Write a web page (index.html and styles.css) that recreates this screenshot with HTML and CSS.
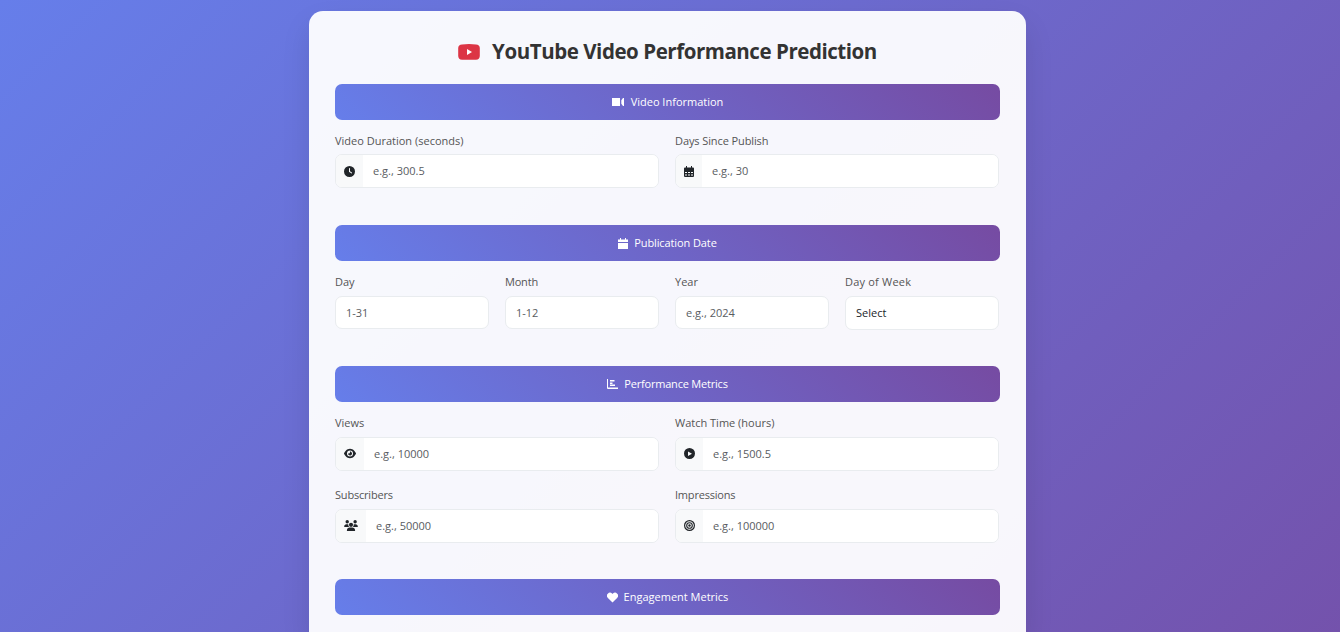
FILE: index.html
```html
<!DOCTYPE html>
<html lang="en">
<head>
<meta charset="utf-8">
<title>YouTube Video Performance Prediction</title>
<link rel="stylesheet" href="styles.css">
</head>
<body>
<main class="card">
  <h1 class="title">
    <svg class="logo" viewBox="0 0 22 16"><path d="M4 .4Q11-.4 18 .4 21.600.4 21.800 4v8q-.2 3.600-3.800 3.800H4Q.4 15.600.2 12V4Q.4.400 4 .4z" fill="#dc3545"/><path d="M9 5v6l5-3z" fill="#fff"/></svg>
    <span>YouTube Video Performance Prediction</span>
  </h1>

  <section class="section">
    <h2 class="bar"><svg width="13" height="12" viewBox="0 0 13 12"><path d="M1 2h7v8H1a1 1 0 0 1-1-1V3a1 1 0 0 1 1-1zM8 2v8H0V2zM9.300 4.200 11 2h1v8h-1L9.300 7.800z"/></svg><span class="bar-text">Video Information</span></h2>
    <div class="grid two">
      <label class="field"><span class="label">Video Duration (seconds)</span>
        <span class="group"><span class="addon"><svg width="11" height="11" viewBox="0 0 512 512"><path d="M256 0a256 256 0 1 1 0 512A256 256 0 1 1 256 0zM232 120v136c0 8 4 15.500 10.700 20l96 64c11 7.400 25.900 4.400 33.300-6.700s4.400-25.900-6.700-33.300L280 243.200V120c0-13.300-10.700-24-24-24s-24 10.700-24 24z"/></svg></span><input class="input" placeholder="e.g., 300.5"></span></label>
      <label class="field"><span class="label snug">Days Since Publish</span>
        <span class="group"><span class="addon"><svg width="10" height="11" viewBox="0 0 10 11"><path fill-rule="evenodd" d="M2 0h1v1.500h4V0h1v1.500h1a1 1 0 0 1 1 1V10a1 1 0 0 1-1 1H1a1 1 0 0 1-1-1V2.500a1 1 0 0 1 1-1h1zM1 6v1h2V6zm3 0v1h2V6zm3 0v1h2V6zM1 8.500v1h2v-1zm3 0v1h2v-1zm3 0v1h2v-1z"/></svg></span><input class="input" placeholder="e.g., 30"></span></label>
    </div>
  </section>

  <section class="section">
    <h2 class="bar"><svg width="10" height="11" viewBox="0 0 10 11"><path d="M2 0h1v1.500h4V0h1v1.500h2V4H0V1.500h2zM0 5h10v6H0z"/></svg><span class="bar-text snug">Publication Date</span></h2>
    <div class="grid four">
      <label class="field"><span class="label">Day</span><input class="input solo" placeholder="1-31"></label>
      <label class="field"><span class="label tight">Month</span><input class="input solo" placeholder="1-12"></label>
      <label class="field"><span class="label">Year</span><input class="input solo" placeholder="e.g., 2024"></label>
      <label class="field"><span class="label loose">Day of Week</span><select class="input solo select"><option>Select</option></select></label>
    </div>
  </section>

  <section class="section">
    <h2 class="bar"><svg width="11" height="11" viewBox="0 0 11 11"><path d="M0 0h1v8.500h10V10H1a1 1 0 0 1-1-1zM3 1h4.500v1.500H3zM3 3.500h2.500V5H3zM3 5.500h5V7H3z"/></svg><span class="bar-text tight">Performance Metrics</span></h2>
    <div class="grid two rows">
      <label class="field"><span class="label">Views</span>
        <span class="group"><span class="addon"><svg width="12" height="11" viewBox="0 0 576 512"><path d="M288 32c-80.800 0-145.500 36.800-192.600 80.600C48.600 156 17.300 208 2.500 243.700c-3.300 7.900-3.300 16.700 0 24.600C17.300 304 48.600 356 95.400 399.400 142.500 443.200 207.200 480 288 480s145.500-36.800 192.600-80.600c46.800-43.500 78.100-95.400 93-131.100 3.300-7.900 3.300-16.700 0-24.600-14.900-35.700-46.200-87.700-93-131.100C433.500 68.800 368.800 32 288 32zM144 256a144 144 0 1 1 288 0 144 144 0 1 1-288 0zm144-64c0 35.300-28.700 64-64 64-7.100 0-13.900-1.200-20.300-3.300-5.500-1.800-11.900 1.600-11.700 7.400.3 6.900 1.300 13.800 3.200 20.700 13.700 51.200 66.400 81.600 117.600 67.900s81.600-66.400 67.900-117.600c-11.100-41.500-47.800-69.400-88.600-71.100-5.800-.2-9.200 6.100-7.400 11.700 2.100 6.400 3.300 13.200 3.300 20.300z"/></svg></span><input class="input" placeholder="e.g., 10000"></span></label>
      <label class="field"><span class="label">Watch Time (hours)</span>
        <span class="group"><span class="addon"><svg width="11" height="11" viewBox="0 0 11 11"><path fill-rule="evenodd" d="M5.500 0a5.500 5.500 0 1 1 0 11 5.500 5.500 0 0 1 0-11zM4 3.500v4.500l4-2.250z"/></svg></span><input class="input" placeholder="e.g., 1500.5"></span></label>
      <label class="field"><span class="label tight">Subscribers</span>
        <span class="group"><span class="addon"><svg width="14" height="11" viewBox="0 0 640 512"><path d="M144 0a80 80 0 1 1 0 160 80 80 0 1 1 0-160zM512 0a80 80 0 1 1 0 160 80 80 0 1 1 0-160zM0 298.700C0 239.800 47.800 192 106.700 192h42.700c15.900 0 31 3.500 44.600 9.700-1.300 7.200-1.900 14.700-1.900 22.300 0 38.200 16.800 72.500 43.300 96H21.300C9.600 320 0 310.400 0 298.700zM405.300 320h-.7c26.600-23.500 43.300-57.800 43.300-96 0-7.600-.7-15-1.900-22.300 13.600-6.300 28.700-9.700 44.600-9.700h42.700C592.200 192 640 239.800 640 298.700c0 11.800-9.600 21.300-21.300 21.300zM224 224a96 96 0 1 1 192 0 96 96 0 1 1-192 0zM128 485.300C128 411.700 187.700 352 261.300 352h117.300C452.300 352 512 411.700 512 485.300c0 14.700-11.900 26.700-26.700 26.700H154.700c-14.700 0-26.700-11.900-26.700-26.700z"/></svg></span><input class="input" placeholder="e.g., 50000"></span></label>
      <label class="field"><span class="label tight">Impressions</span>
        <span class="group"><span class="addon"><svg width="11" height="11" viewBox="0 0 11 11"><g fill="none" stroke="#212529"><circle cx="5.500" cy="5.500" r="4.900" stroke-width="1.200"/><circle cx="5.500" cy="5.500" r="2.800" stroke-width="1.100"/></g><circle cx="5.500" cy="5.500" r="1.200"/></svg></span><input class="input" placeholder="e.g., 100000"></span></label>
    </div>
  </section>

  <section class="section last">
    <h2 class="bar"><svg width="11" height="11" viewBox="0 0 11 11"><path d="M5.500 10.500.9 6A3 3 0 0 1 5.100 1.600l.4.400.4-.4A3 3 0 0 1 10.100 6z"/></svg><span class="bar-text">Engagement Metrics</span></h2>
  </section>
</main>
</body>
</html>
```
FILE: styles.css
```css
* { box-sizing: border-box; }
body {
  margin: 0;
  height: 632px;
  padding-top: 11px;
  overflow: hidden;
  background: linear-gradient(135deg, #667eea 0%, #764ba2 100%) 0 0 / 100% 950px no-repeat;
  font-family: "Open Sans", "Noto Sans", sans-serif;
  font-size: 11px;
  color: #212529;
}
.card {
  width: 717px;
  height: 621px;
  margin-left: 309px;
  padding: 26px 26px 0;
  border-radius: 14px 14px 0 0;
  background: rgba(255, 255, 255, .95);
  box-shadow: 0 14px 29px rgba(0, 0, 0, .1);
}
.title {
  display: flex;
  align-items: center;
  justify-content: center;
  gap: 12px;
  height: 29px;
  margin: 0 0 18px;
  font-size: 20.5px;
  font-weight: 700;
  line-height: 29px;
  letter-spacing: -.45px;
  color: #333;
  white-space: nowrap;
}
.logo { width: 22px; height: 16px; }
.section { margin-bottom: 37px; }
.last { margin-bottom: 0; }
.bar {
  display: flex;
  align-items: center;
  justify-content: center;
  gap: 6px;
  height: 36px;
  margin: 0 0 14px;
  border-radius: 7px;
  background: linear-gradient(45deg, #667eea, #764ba2);
  color: #fff;
  font-size: 11px;
  font-weight: 400;
}
.last .bar { margin-bottom: 0; }
.bar-text { padding-bottom: 2px; }
.snug { letter-spacing: -.1px; }
.tight { letter-spacing: -.2px; }
.loose { letter-spacing: .2px; }
svg { display: block; flex: none; fill: currentColor; }
.grid { display: grid; width: 664px; column-gap: 16px; }
.two { grid-template-columns: repeat(2, 1fr); }
.four { grid-template-columns: repeat(4, 1fr); height: 54px; }
.rows { row-gap: 17px; margin-bottom: -1px; }
.field { display: block; min-width: 0; }
.label {
  display: block;
  height: 14px;
  margin-bottom: 6px;
  line-height: 14px;
  color: #555;
}
.rows .label, .four .label { margin-bottom: 7px; }
.group {
  display: flex;
  height: 34px;
  border: 1px solid #e9ecef;
  border-radius: 7px;
  background: #fff;
  overflow: hidden;
}
.addon {
  display: flex;
  align-items: center;
  padding: 0 8px;
  background: #f8f9fa;
}
.rows .addon { padding-bottom: 2px; }
.input {
  flex: 1;
  min-width: 0;
  margin: 0;
  padding: 0 10px 2px;
  border: 0;
  outline: 0;
  background: #fff;
  color: #212529;
  font: inherit;
}
.input::placeholder { color: #595c5f; opacity: 1; }
.solo {
  display: block;
  width: 100%;
  height: 33px;
  padding-bottom: 0;
  border: 1px solid #e9ecef;
  border-radius: 7px;
}
.select { height: 34px; padding-bottom: 2px; appearance: none; }
```
